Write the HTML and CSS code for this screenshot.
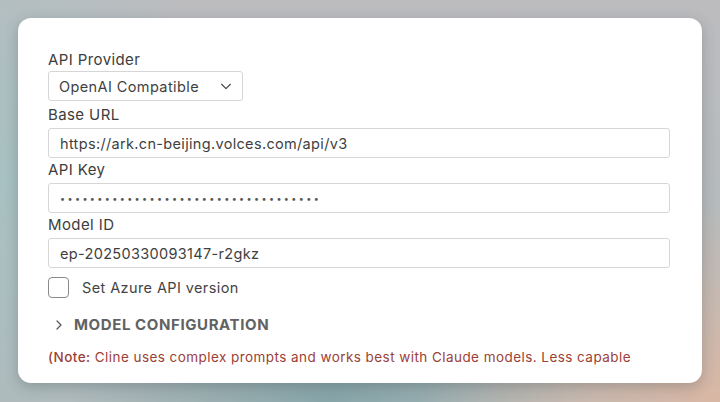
FILE: index.html
```html
<!DOCTYPE html>
<html lang="en">
<head>
    <meta charset="UTF-8">
    <meta name="viewport" content="width=device-width, initial-scale=1.0">
    <title>API Settings</title>
    <link rel="stylesheet" href="styles.css">
</head>
<body>
    <div class="settings-card">
        <div class="field">
            <label class="field-label">API Provider</label>
            <div class="select-box">
                <span>OpenAI Compatible</span>
                <svg class="select-arrow" width="14" height="14" viewBox="0 0 16 16" fill="none" stroke="#444" stroke-width="1.3" stroke-linecap="round" stroke-linejoin="round">
                    <path d="M3 6l5 5 5-5"/>
                </svg>
            </div>
        </div>
        <div class="field">
            <label class="field-label">Base URL</label>
            <div class="text-input">https://ark.cn-beijing.volces.com/api/v3</div>
        </div>
        <div class="field">
            <label class="field-label">API Key</label>
            <div class="text-input password">•••••••••••••••••••••••••••••••••••</div>
        </div>
        <div class="field">
            <label class="field-label">Model ID</label>
            <div class="text-input">ep-20250330093147-r2gkz</div>
        </div>

        <div class="checkbox-row">
            <span class="checkbox"></span>
            <span>Set Azure API version</span>
        </div>

        <div class="collapse-row">
            <svg width="10" height="12" viewBox="0 0 10 12" fill="none" stroke="#555" stroke-width="1.2" stroke-linecap="round" stroke-linejoin="round">
                <path d="M3 2l4 4-4 4"/>
            </svg>
            <span>MODEL CONFIGURATION</span>
        </div>

        <p class="note"><b>(Note:</b> Cline uses complex prompts and works best with Claude models. Less capable</p>
    </div>
</body>
</html>
```

FILE: styles.css
```css
* {
    margin: 0;
    padding: 0;
    box-sizing: border-box;
}
body {
    width: 720px;
    height: 402px;
    overflow: hidden;
    padding: 18px;
    font-family: Inter, "Noto Sans", sans-serif;
    color: #3b3b3b;
    background-color: #b3bcbd;
    background-image:
        radial-gradient(ellipse 300px 200px at 720px 402px, #dab7a4 0%, rgba(218, 183, 164, 0) 100%),
        radial-gradient(ellipse 260px 140px at 330px 402px, #86a5a9 0%, rgba(134, 165, 169, 0) 100%),
        radial-gradient(ellipse 220px 300px at 0px 180px, #a7c1c2 0%, rgba(167, 193, 194, 0) 100%),
        linear-gradient(180deg, #bcbcbf 0%, #b1b9ba 100%);
}

.settings-card {
    width: 684px;
    height: 365px;
    background-color: #fff;
    border-radius: 13px;
    padding: 32px 32px 0 30px;
    overflow: hidden;
    box-shadow: 0 4px 14px rgba(40, 50, 60, 0.25);
}

.field-label {
    display: block;
    font-size: 15px;
    line-height: 20px;
    letter-spacing: 0.4px;
    padding: 2px 0 3px;
    color: #3d3d3d;
}
.field:first-child .field-label {
    padding: 0 0 1px;
}
.field:nth-child(2) .field-label {
    padding-top: 4px;
}

.select-box {
    width: 195px;
    height: 30px;
    display: flex;
    align-items: center;
    justify-content: space-between;
    padding: 0 9px 0 10px;
    border: 1px solid #d6d6d6;
    border-radius: 3px;
    font-size: 14.5px;
    letter-spacing: 0.4px;
    color: #3f3f3f;
}

.text-input {
    height: 30px;
    display: flex;
    align-items: center;
    padding: 0 11px;
    border: 1px solid #d6d6d6;
    border-radius: 3px;
    font-size: 14.5px;
    letter-spacing: 0.33px;
    color: #3f3f3f;
}
.text-input.password {
    font-size: 9px;
    letter-spacing: 2.4px;
    color: #555;
}

.checkbox-row {
    display: flex;
    align-items: center;
    gap: 13px;
    margin-top: 9px;
    font-size: 14.5px;
    letter-spacing: 0.4px;
    color: #444;
}
.checkbox {
    width: 21px;
    height: 21px;
    border: 1px solid #8a8a8a;
    border-radius: 4px;
}

.collapse-row {
    display: flex;
    align-items: center;
    gap: 10px;
    margin-top: 17px;
    padding-left: 6px;
    font-size: 15px;
    font-weight: 700;
    color: #626262;
    letter-spacing: 0.6px;
}

.note {
    margin-top: 14px;
    font-size: 13.5px;
    line-height: 18px;
    letter-spacing: 0.44px;
    white-space: nowrap;
    color: #9c3f36;
}
.note b {
    font-weight: 500;
}
```
